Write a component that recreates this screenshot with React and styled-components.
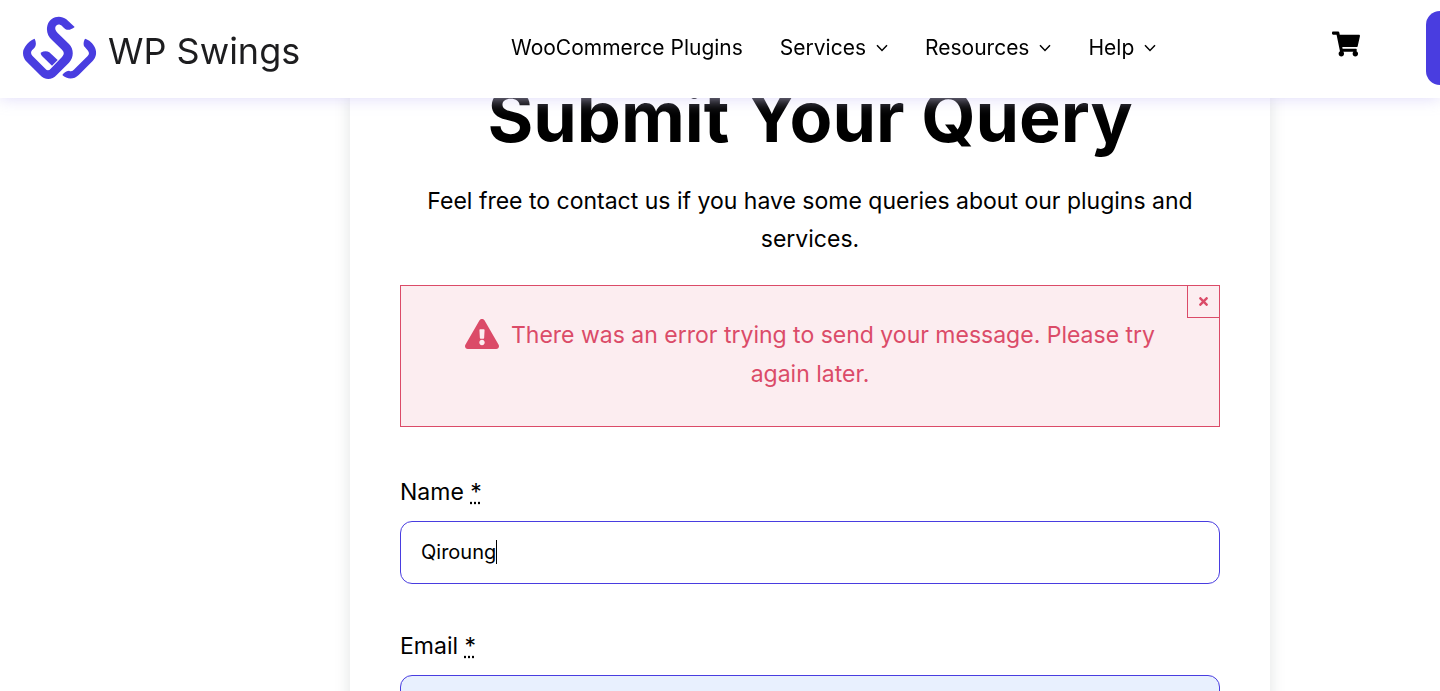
import React from "react"
import styled, { createGlobalStyle } from "styled-components"
import { FaShoppingCart, FaExclamationTriangle, FaTimes } from "react-icons/fa"

const GlobalStyle = createGlobalStyle`
  * {
    box-sizing: border-box;
  }

  body {
    margin: 0;
    background-color: #fff;
    color: #000;
    font-family: Inter, "Liberation Sans", sans-serif;
  }
`

const Page = styled.div`
  height: 100vh;
  overflow: hidden;
`

const Header = styled.header`
  position: fixed;
  top: 0;
  left: 0;
  right: 0;
  z-index: 10;
  height: 98px;
  padding-bottom: 2px;
  display: flex;
  align-items: center;
  background-color: #fff;
  box-shadow: 0 0 15px rgba(212, 208, 248, 0.8);
`

const LogoLink = styled.a`
  flex: none;
  width: 511px;
  padding-left: 22px;
  display: flex;
  align-items: flex-end;
  gap: 10px;
  color: #1d1d1f;
  font-size: 36px;
  line-height: 62px;
  text-decoration: none;
`

const LogoMark = styled.svg`
  width: 76px;
  height: 67px;
  fill: #493de0;
`

const Nav = styled.nav`
  display: flex;
  align-items: center;
  gap: 37px;
  flex: 1;
`

const NavLink = styled.a`
  display: flex;
  align-items: center;
  gap: 10px;
  color: #000;
  font-size: 21px;
  line-height: 24px;
  text-decoration: none;
  white-space: nowrap;
`

const Chevron = styled.svg`
  width: 12px;
  height: 8px;
  fill: none;
  stroke: #000;
  stroke-width: 1.5;
`

const CartLink = styled.a`
  display: flex;
  margin-right: 66px;
  margin-bottom: 8px;
  color: #000;
  font-size: 28px;
`

const HeaderButton = styled.button`
  flex: none;
  width: 14px;
  height: 74px;
  border: 0;
  border-radius: 16px 0 0 16px;
  background-color: #493de0;
`

const Content = styled.div`
  padding-left: 180px;
`

const Card = styled.main`
  max-width: 920px;
  margin: 0 auto;
  padding: 72px 50px 0;
  box-shadow: 0 0 15px rgba(20, 50, 40, 0.13);
`

const Title = styled.h1`
  margin: 0;
  font-size: 70px;
  line-height: 90px;
  font-weight: 700;
  text-align: center;
`

const Intro = styled.p`
  margin: 20px 0 27px;
  font-size: 23px;
  line-height: 38px;
  text-align: center;
`

const Alert = styled.div`
  display: grid;
  grid-template-columns: 1fr 32px;
  margin-bottom: 46px;
  border: 1px solid #db4b68;
  background-color: #fcedf0;
  color: #db4b68;
`

const AlertText = styled.p`
  grid-area: 1 / 1 / 2 / 3;
  margin: 0;
  padding: 30px 50px 32px;
  font-size: 23px;
  line-height: 39px;
  text-align: center;

  svg {
    margin-right: 12px;
    font-size: 34px;
    vertical-align: -8px;
  }
`

const CloseButton = styled.button`
  grid-area: 1 / 2;
  height: 32px;
  padding: 0;
  display: flex;
  align-items: center;
  justify-content: center;
  border: 0 solid #db4b68;
  border-width: 0 0 1px 1px;
  background: none;
  color: inherit;
  font-size: 13px;
`

const Label = styled.label`
  display: block;
  font-size: 23px;
  line-height: 38px;

  abbr {
    text-decoration: underline dotted;
  }
`

const Field = styled.div`
  display: flex;
  align-items: center;
  height: 63px;
  margin: 10px 0 43px;
  padding: 0 20px 2px;
  border: 1px solid #493de0;
  border-radius: 12px;
  background-color: ${props => (props.$filled ? "#e8f0fe" : "#fff")};
`

const Input = styled.input`
  field-sizing: content;
  min-width: 1px;
  padding: 0;
  border: 0;
  outline: 0;
  background: none;
  color: #000;
  font-family: inherit;
  font-size: 20px;
  line-height: 24px;
`

const Caret = styled.span`
  width: 1px;
  height: 24px;
  background-color: #000;
`

function NavItem({ label, menu }) {
  return (
    <NavLink href="#">
      {label}
      {menu && (
        <Chevron viewBox="0 0 12 8" aria-hidden="true">
          <path d="M1 1.2 6 6.4 11 1.2" />
        </Chevron>
      )}
    </NavLink>
  )
}

function FormField({ id, label, type = "text", value, filled, caret }) {
  return (
    <>
      <Label htmlFor={id}>
        {label} <abbr>*</abbr>
      </Label>
      <Field $filled={filled}>
        <Input id={id} type={type} defaultValue={value} />
        {caret && <Caret />}
      </Field>
    </>
  )
}

export default function App() {
  return (
    <Page>
      <GlobalStyle />
      <Header>
        <LogoLink href="#">
          <LogoMark viewBox="36 30 228 201" aria-hidden="true">
            <path d="M194 66 L169 43 C150 28 119 35 112 62 C108 80 114 94 126 105 L156 134 C163 141 163 149 156 156 L122 191 C117 197 111 197 106 191 L67 152 C62 147 62 141 66 136 L73 129 C79 123 79 111 74 101 C60 105 45 122 40 136 C37 149 41 161 50 170 L90 210 C104 226 126 226 140 210 L177 173 C192 158 192 132 177 117 L143 84 C135 76 133 67 140 61 C145 57 151 59 156 63 L162 69 C172 79 183 74 194 66 Z" />
            <path d="M92 143 Q107 135 118 142 L143 165 L126 182 L96 153 Q92 149 92 143 Z" />
            <path d="M225 101 C236 103 250 116 255 128 C261 142 259 156 248 168 L206 210 C191 225 170 223 157 210 C161 203 168 198 177 197 C184 201 188 198 193 193 L233 153 C238 147 238 143 234 137 L225 127 C219 121 220 110 225 101 Z" />
          </LogoMark>
          WP Swings
        </LogoLink>
        <Nav>
          <NavItem label="WooCommerce Plugins" />
          <NavItem label="Services" menu />
          <NavItem label="Resources" menu />
          <NavItem label="Help" menu />
        </Nav>
        <CartLink href="#" aria-label="Cart">
          <FaShoppingCart />
        </CartLink>
        <HeaderButton aria-label="Account" />
      </Header>
      <Content>
        <Card>
          <Title>Submit Your Query</Title>
          <Intro>
            Feel free to contact us if you have some queries about our plugins
            and services.
          </Intro>
          <Alert role="alert">
            <AlertText>
              <FaExclamationTriangle />
              There was an error trying to send your message. Please try again
              later.
            </AlertText>
            <CloseButton aria-label="Close">
              <FaTimes />
            </CloseButton>
          </Alert>
          <FormField id="name" label="Name" value="Qiroung" caret />
          <FormField id="email" label="Email" type="email" filled />
        </Card>
      </Content>
    </Page>
  )
}
